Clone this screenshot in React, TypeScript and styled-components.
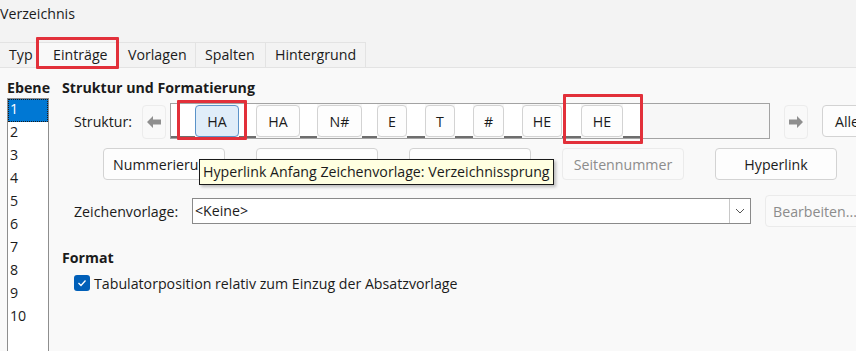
import React from "react";
import styled, { createGlobalStyle, css } from "styled-components";

const GlobalStyle = createGlobalStyle`
  html, body {
    margin: 0;
    padding: 0;
    background: #f9f9f9;
  }
  body {
    font-family: "Open Sans", "Noto Sans", sans-serif;
    font-size: 14.2px;
    color: #1b1b1b;
  }
`;

const RED = "#e2303a";

const Window = styled.div`
  width: 856px;
  height: 351px;
  overflow: hidden;
  display: flex;
  flex-direction: column;
  background: #f9f9f9;
`;

const TitleBar = styled.div`
  height: 30px;
  line-height: 28px;
  background: #f3f3f3;
`;

const TabStrip = styled.div`
  display: flex;
  align-items: flex-end;
  height: 37px;
  background: #f3f3f3;
  border-bottom: 1px solid #e3e3e3;
`;

const Tab = styled.div<{ $w: number; $active?: boolean; $marked?: boolean }>`
  position: relative;
  width: ${(p) => p.$w}px;
  box-sizing: border-box;
  height: 25px;
  line-height: 23px;
  padding-left: 9px;
  white-space: nowrap;
  border: 1px solid #e3e3e3;
  border-bottom: none;
  border-left: none;
  background: ${(p) => (p.$active ? "#f9f9f9" : "#f3f3f3")};
  ${(p) =>
    p.$active &&
    css`
      height: 26px;
      margin-bottom: -1px;
      padding-left: 16px;
    `}
  ${(p) =>
    p.$marked &&
    css`
      &::after {
        content: "";
        position: absolute;
        left: -1px;
        top: -6px;
        right: -1px;
        bottom: -1px;
        border: 3px solid ${RED};
        border-radius: 1px;
      }
    `}
`;

const Panel = styled.div`
  flex: 1;
  display: flex;
  padding: 10px 0 0 7px;
  min-height: 0;
`;

const LevelColumn = styled.div`
  width: 42px;
  display: flex;
  flex-direction: column;
`;

const Heading = styled.div<{ $top?: number }>`
  font-weight: 700;
  height: 20px;
  line-height: 20px;
  white-space: nowrap;
  margin-top: ${(p) => p.$top ?? 0}px;
`;

const LevelList = styled.ul`
  list-style: none;
  margin: 0;
  padding: 0;
  flex: 1;
  background: #ffffff;
  border: 1px solid #8e8e8e;
  border-bottom: none;
`;

const LevelItem = styled.li<{ $selected?: boolean }>`
  height: 23px;
  line-height: 19px;
  padding-left: 2px;
  ${(p) =>
    p.$selected &&
    css`
      background: #0078d4;
      color: #ffffff;
      outline: 1px dotted #1a1a1a;
      outline-offset: -1px;
    `}
`;

const Content = styled.div`
  flex: 1;
  margin-left: 13px;
  display: flex;
  flex-direction: column;
`;

const Row = styled.div<{ $top: number }>`
  position: relative;
  display: flex;
  align-items: center;
  margin-top: ${(p) => p.$top}px;
  padding-left: 12px;
`;

const Label = styled.div<{ $width: number }>`
  width: ${(p) => p.$width}px;
  flex: none;
  white-space: nowrap;
`;

const ArrowButton = styled.div`
  width: 24px;
  height: 34px;
  flex: none;
  box-sizing: border-box;
  display: flex;
  align-items: center;
  justify-content: center;
  border: 1px solid #ececec;
  border-radius: 4px;
  background: #f9f9f9;
  margin-top: 2px;
`;

const StructBox = styled.div`
  position: relative;
  width: 600px;
  height: 36px;
  box-sizing: border-box;
  margin: 0 14px 0 4px;
  display: flex;
  align-items: stretch;
  border: 1px solid #a3a3a3;
  background: #f7f7f7;
`;

const Gap = styled.div<{ $width: number }>`
  width: ${(p) => p.$width}px;
  flex: none;
  background: #ffffff;
  border-bottom: 2px solid #6e6e6e;
  box-sizing: border-box;
`;

const Token = styled.div<{ $width: number; $selected?: boolean }>`
  flex: none;
  width: ${(p) => p.$width}px;
  height: 32px;
  margin-top: 1px;
  box-sizing: border-box;
  display: flex;
  align-items: center;
  justify-content: center;
  border-radius: 4px;
  border: 1px solid ${(p) => (p.$selected ? "#5b93c9" : "#d3d3d3")};
  background: ${(p) => (p.$selected ? "#e0edf9" : "#fdfdfd")};
`;

const Mark = styled.div<{ $left: number; $top: number; $w: number; $h: number }>`
  position: absolute;
  left: ${(p) => p.$left}px;
  top: ${(p) => p.$top}px;
  width: ${(p) => p.$w}px;
  height: ${(p) => p.$h}px;
  box-sizing: border-box;
  border: 3px solid ${RED};
  border-radius: 1px;
  pointer-events: none;
`;

const PushButton = styled.div<{ $width: number; $disabled?: boolean; $gapLeft?: number }>`
  width: ${(p) => p.$width}px;
  height: 32px;
  flex: none;
  box-sizing: border-box;
  margin-left: ${(p) => p.$gapLeft ?? 0}px;
  display: flex;
  align-items: center;
  justify-content: center;
  white-space: nowrap;
  overflow: hidden;
  border-radius: 4px;
  border: 1px solid ${(p) => (p.$disabled ? "#ebebeb" : "#d3d3d3")};
  background: ${(p) => (p.$disabled ? "#fafafa" : "#fdfdfd")};
  color: ${(p) => (p.$disabled ? "#8c8c8c" : "#1b1b1b")};
`;

const ButtonRow = styled.div`
  position: relative;
  display: flex;
  gap: 31px;
  margin-top: 9px;
  padding-left: 41px;
`;

const Tooltip = styled.div`
  position: absolute;
  left: 137px;
  top: 11px;
  width: 355px;
  height: 26px;
  box-sizing: border-box;
  padding-left: 3px;
  line-height: 24px;
  white-space: nowrap;
  background: #ffffe1;
  border: 1px solid #1a1a1a;
  box-shadow: 2px 2px 3px rgba(0, 0, 0, 0.25);
  z-index: 2;
`;

const Combo = styled.div`
  width: 559px;
  height: 26px;
  flex: none;
  box-sizing: border-box;
  display: flex;
  align-items: stretch;
  border: 1px solid #8a8a8a;
  background: #ffffff;
  margin-right: 14px;
`;

const ComboText = styled.div`
  flex: 1;
  padding-left: 2px;
  line-height: 24px;
`;

const ComboArrow = styled.div`
  width: 20px;
  display: flex;
  align-items: center;
  justify-content: center;
  border-left: 1px solid #c8c8c8;
`;

const CheckRow = styled.div`
  display: flex;
  align-items: center;
  gap: 4px;
  margin-top: 5px;
  padding-left: 12px;
  height: 20px;
`;

const CheckBox = styled.div`
  width: 16px;
  height: 16px;
  flex: none;
  border-radius: 3px;
  background: #005fb8;
  display: flex;
  align-items: center;
  justify-content: center;
`;

const ArrowIcon = ({ dir }: { dir: "left" | "right" }) => (
  <svg width="16" height="14" viewBox="0 0 16 14">
    <path
      d="M1 7 L7 1 L7 4.5 L15 4.5 L15 9.5 L7 9.5 L7 13 Z"
      fill="#8f8f8f"
      transform={dir === "right" ? "translate(16 0) scale(-1 1)" : undefined}
    />
  </svg>
);

const tabs = [
  { label: "Typ", w: 37 },
  { label: "Einträge", w: 82, active: true },
  { label: "Vorlagen", w: 77 },
  { label: "Spalten", w: 70 },
  { label: "Hintergrund", w: 100 },
];

const levels = ["1", "2", "3", "4", "5", "6", "7", "8", "9", "10"];

const tokens: { text: string; gap: number; w: number; selected?: boolean }[] = [
  { text: "HA", gap: 24, w: 44, selected: true },
  { text: "HA", gap: 17, w: 44 },
  { text: "N#", gap: 17, w: 45 },
  { text: "E", gap: 15, w: 30 },
  { text: "T", gap: 18, w: 30 },
  { text: "#", gap: 18, w: 31 },
  { text: "HE", gap: 18, w: 40 },
  { text: "HE", gap: 19, w: 42 },
];

export default function App() {
  return (
    <>
      <GlobalStyle />
      <Window>
        <TitleBar>Verzeichnis</TitleBar>
        <TabStrip>
          {tabs.map((t) => (
            <Tab key={t.label} $w={t.w} $active={t.active} $marked={t.active}>
              {t.label}
            </Tab>
          ))}
        </TabStrip>
        <Panel>
          <LevelColumn>
            <Heading>Ebene</Heading>
            <LevelList>
              {levels.map((l, i) => (
                <LevelItem key={l} $selected={i === 0}>
                  {l}
                </LevelItem>
              ))}
            </LevelList>
          </LevelColumn>
          <Content>
            <Heading>Struktur und Formatierung</Heading>
            <Row $top={5}>
              <Label $width={68}>Struktur:</Label>
              <ArrowButton>
                <ArrowIcon dir="left" />
              </ArrowButton>
              <StructBox>
                {tokens.map((t, i) => (
                  <React.Fragment key={i}>
                    <Gap $width={t.gap} />
                    <Token $width={t.w} $selected={t.selected}>
                      {t.text}
                    </Token>
                  </React.Fragment>
                ))}
                <Gap $width={17} />
                <Mark $left={6} $top={-4} $w={70} $h={40} />
                <Mark $left={392} $top={-10} $w={80} $h={50} />
              </StructBox>
              <ArrowButton>
                <ArrowIcon dir="right" />
              </ArrowButton>
              <PushButton $width={50} $gapLeft={14}>
                Alle
              </PushButton>
            </Row>
            <ButtonRow>
              <PushButton $width={122}>Nummerierung</PushButton>
              <PushButton $width={122}>Eintragstext</PushButton>
              <PushButton $width={122}>Tabulator</PushButton>
              <PushButton $width={122} $disabled>
                Seitennummer
              </PushButton>
              <PushButton $width={122}>Hyperlink</PushButton>
              <Tooltip>Hyperlink Anfang Zeichenvorlage: Verzeichnissprung</Tooltip>
            </ButtonRow>
            <Row $top={15}>
              <Label $width={118}>Zeichenvorlage:</Label>
              <Combo>
                <ComboText>&lt;Keine&gt;</ComboText>
                <ComboArrow>
                  <svg width="10" height="6" viewBox="0 0 10 6">
                    <path d="M1 1 L5 5 L9 1" fill="none" stroke="#555" strokeWidth="1" />
                  </svg>
                </ComboArrow>
              </Combo>
              <PushButton $width={100} $disabled>
                Bearbeiten...
              </PushButton>
            </Row>
            <Heading $top={21}>Format</Heading>
            <CheckRow>
              <CheckBox>
                <svg width="10" height="8" viewBox="0 0 10 8">
                  <path d="M1.5 4 L4 6.5 L8.5 1.5" fill="none" stroke="#fff" strokeWidth="1.3" />
                </svg>
              </CheckBox>
              <span>Tabulatorposition relativ zum Einzug der Absatzvorlage</span>
            </CheckRow>
          </Content>
        </Panel>
      </Window>
    </>
  );
}
